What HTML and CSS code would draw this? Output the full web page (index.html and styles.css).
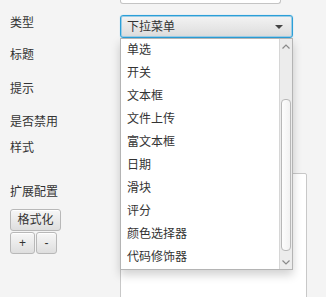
FILE: index.html
```html
<!DOCTYPE html>
<html lang="zh">
<head>
<meta charset="utf-8">
<link rel="stylesheet" href="styles.css">
</head>
<body>
<div class="page">
  <div class="labels">
    <div class="lbl lbl-type">类型</div>
    <div class="lbl lbl-title">标题</div>
    <div class="lbl lbl-tip">提示</div>
    <div class="lbl lbl-disabled">是否禁用</div>
    <div class="lbl lbl-style">样式</div>
    <div class="lbl lbl-ext">扩展配置</div>
    <button class="btn btn-format">格式化</button>
    <div class="btn-row">
      <button class="btn btn-plus">+</button>
      <button class="btn btn-minus">-</button>
    </div>
  </div>
  <div class="controls">
    <div class="field-top"></div>
    <div class="combo">
      <span class="combo-text">下拉菜单</span>
      <span class="combo-arrow"></span>
    </div>
    <div class="textarea"></div>
  </div>
  <div class="popup">
    <ul class="list">
      <li>单选</li>
      <li>开关</li>
      <li>文本框</li>
      <li>文件上传</li>
      <li>富文本框</li>
      <li>日期</li>
      <li>滑块</li>
      <li>评分</li>
      <li>颜色选择器</li>
      <li>代码修饰器</li>
    </ul>
    <div class="scrollbar">
      <div class="sb-btn sb-up">
        <svg width="8" height="5" viewBox="0 0 8 5"><polyline points="0.5,4.5 4,1 7.5,4.5" fill="none" stroke="#8a8a8a" stroke-width="1.2"/></svg>
      </div>
      <div class="sb-track">
        <div class="sb-thumb"></div>
      </div>
      <div class="sb-btn sb-down">
        <svg width="8" height="5" viewBox="0 0 8 5"><polyline points="0.5,0.5 4,4 7.5,0.5" fill="none" stroke="#8a8a8a" stroke-width="1.2"/></svg>
      </div>
    </div>
  </div>
</div>
</body>
</html>
```
FILE: styles.css
```css
html, body {
  margin: 0;
  padding: 0;
  background: #f4f4f4;
  overflow: hidden;
}
body {
  width: 326px;
  height: 297px;
  font-family: "Liberation Sans", "Noto Sans CJK SC", sans-serif;
  font-size: 12px;
  color: #333;
}
.page {
  position: relative;
  display: flex;
  height: 297px;
}
.labels {
  width: 110px;
  padding-left: 10px;
  display: flex;
  flex-direction: column;
  align-items: flex-start;
}
.lbl {
  height: 16px;
  line-height: 16px;
  white-space: nowrap;
}
.lbl-type { margin-top: 15px; }
.lbl-title { margin-top: 16px; }
.lbl-tip { margin-top: 18px; }
.lbl-disabled { margin-top: 17px; }
.lbl-style { margin-top: 10px; }
.lbl-ext { margin-top: 28px; }
.btn {
  font-family: "Liberation Sans", "Noto Sans CJK SC", sans-serif;
  font-size: 12px;
  color: #333;
  border: 1px solid #b8b8b8;
  border-radius: 3px;
  background: linear-gradient(#f7f7f7, #dedede);
  box-shadow: inset 0 1px 0 #fff;
  padding: 0;
  height: 22px;
  line-height: 20px;
  margin: 0;
}
.btn-format {
  margin-top: 9px;
  width: 51px;
}
.btn-row {
  display: flex;
  gap: 1px;
  margin-top: 1px;
}
.btn-plus { width: 25px; }
.btn-minus { width: 21px; }
.controls {
  width: 187px;
  display: flex;
  flex-direction: column;
}
.field-top {
  width: 159px;
  height: 3px;
  background: #fff;
  border: 1px solid #c4c4c4;
  border-top: none;
  border-radius: 0 0 3px 3px;
}
.combo {
  margin-top: 11px;
  width: 173px;
  height: 23px;
  box-sizing: border-box;
  border: 1px solid #2b9fd8;
  border-radius: 3px;
  box-shadow: inset 0 0 0 1px #9ccde6, 0 0 1px #7ec4e8;
  background: linear-gradient(#f3f3f3, #dcdcdc);
  display: flex;
  align-items: center;
  padding: 0 6px 0 6px;
}
.combo-text {
  flex: 1;
  line-height: 16px;
  color: #333;
}
.combo-arrow {
  width: 0;
  height: 0;
  border-left: 4px solid transparent;
  border-right: 4px solid transparent;
  border-top: 4px solid #444;
  margin-right: 3px;
  margin-top: 1px;
}
.textarea {
  margin-top: 135px;
  width: 187px;
  flex: 1;
  box-sizing: border-box;
  background: #fff;
  border: 1px solid #c8c8c8;
  border-radius: 2px;
  margin-bottom: -10px;
}
.popup {
  position: absolute;
  top: 38px;
  left: 120px;
  width: 173px;
  height: 232px;
  box-sizing: border-box;
  background: #fff;
  border: 1px solid #b4b4b4;
  box-shadow: 0 5px 9px rgba(0, 0, 0, 0.18);
  display: flex;
}
.list {
  list-style: none;
  margin: 0;
  padding: 0;
  flex: 1;
}
.list li {
  height: 23px;
  line-height: 23px;
  padding-left: 6px;
  white-space: nowrap;
}
.scrollbar {
  width: 12px;
  display: flex;
  flex-direction: column;
  background: #ececec;
  border-left: 1px solid #d6d6d6;
}
.sb-btn {
  height: 14px;
  display: flex;
  align-items: center;
  justify-content: center;
}
.sb-track {
  flex: 1;
  position: relative;
}
.sb-thumb {
  position: absolute;
  left: 1px;
  right: 1px;
  top: 46px;
  bottom: 4px;
  background: linear-gradient(90deg, #fdfdfd, #f2f2f2);
  border: 1px solid #b8b8b8;
  border-radius: 4px;
}
```
